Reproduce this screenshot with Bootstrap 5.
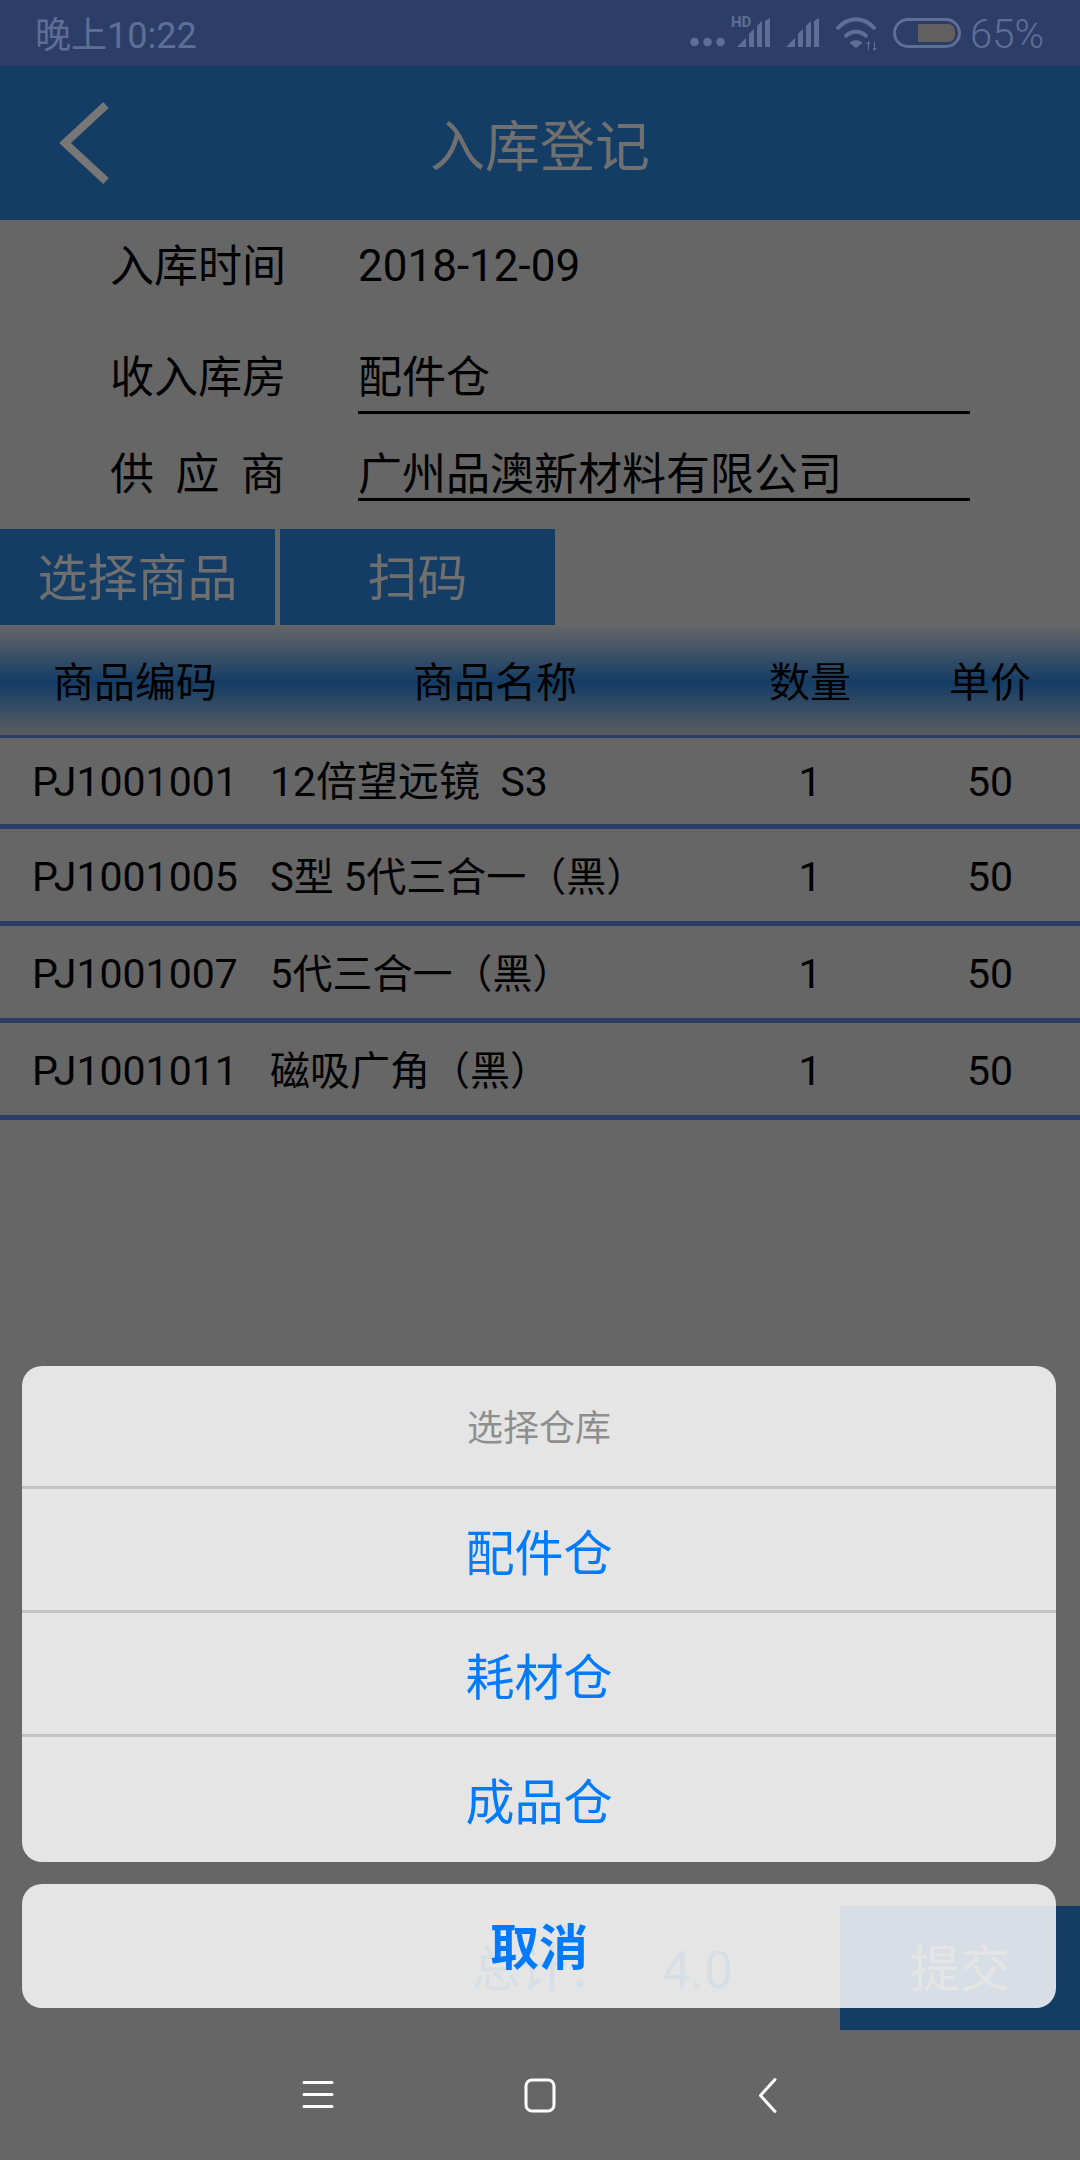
<!DOCTYPE html>
<html lang="zh-CN">
<head>
<meta charset="utf-8">
<title>入库登记</title>
<link rel="stylesheet" href="https://cdn.jsdelivr.net/npm/bootstrap@5.3.0/dist/css/bootstrap.min.css">
<script src="https://cdn.jsdelivr.net/npm/bootstrap@5.3.0/dist/js/bootstrap.bundle.min.js"></script>
<style>
html,body{margin:0;background:#fff}
body{font-family:Roboto,"Noto Sans CJK SC",sans-serif;color:#000}
.screen{width:1080px;height:2160px;overflow:hidden;position:relative;background:#fff}
.status{height:66px;background:#2c3e68;color:#5e6f96;position:relative;z-index:3;padding-left:35px;padding-right:36px}
.status-time{font-size:36px;line-height:1;padding-top:5px}
.status-pct{font-size:40px;line-height:1;font-weight:300;padding-top:4px}
.appbar{height:154px;background:#3298ff;position:relative}
.appbar svg{position:absolute;left:56px;top:34px;z-index:3}
.appbar-title{font-size:55px;line-height:1;color:#707070;position:relative;z-index:3;margin-top:8px}
.frow{padding-left:110px;font-size:44px}
.frow-label{width:248px;flex:none;line-height:1}
.frow-val{width:612px;line-height:1}
.frow1{height:90px;padding-top:2px}
.frow1 .frow-label{padding-top:2px}
.frow2{height:104px}
.frow3{height:87px}
.frow2 .frow-val,.frow3 .frow-val{border-bottom:3px solid #000}
.frow2 .frow-val{padding-bottom:11px}
.frow3 .frow-val{padding-bottom:1px}
.frow2 .frow-label{padding-bottom:14px}
.frow3 .frow-label{padding-bottom:4px;width:175px;margin-right:73px}
.tabs{margin-top:28px;height:96px;gap:5px}
.tab-btn{background:#3298ff;color:#6f6f6f;font-size:50px;height:96px;line-height:1;padding-top:4px}
.tab-btn span{position:relative;z-index:3}
.tab-a{width:275px}
.tab-b{width:275px}
.thead-band{background:linear-gradient(to bottom,#fff 0,#3298ff 52%,#e4e8ec 100%);font-size:41px;padding-top:6px}
.trow{font-size:40px;border-bottom:5px solid #6e9bff;padding-top:5px}
.thead-band,.trow{line-height:1}
.thead-band{border-bottom:3px solid #6e9bff;height:113px}
.trow{height:97px}
.trow.first{height:91px;padding-top:3px}
.c-code{width:270px;flex:none;padding-left:32px}
.trow .c-code{font-size:41px}
.c-name{width:450px;flex:none}
.c-name.wider{font-size:41px}
.c-qty{width:180px;flex:none;text-align:center}
.c-price{width:180px;flex:none;text-align:center}
.trow .c-qty,.trow .c-price{font-size:41px}
.h-code{text-align:center;padding-left:0}
.h-name{text-align:center}
.foot{height:124px;background:#fff;margin-top:auto;color:#3298ff;font-size:48px;line-height:1}
.foot-total{padding-left:472px;width:840px;padding-top:4px}
.foot-total b{font-weight:400;font-size:51px;margin-left:46px}
.foot-submit{width:240px;background:#3298ff;color:#fff;font-size:50px;padding-top:4px}
.softkeys{height:130px;background:#666;position:relative;z-index:3}
.dim{position:absolute;inset:0;background:rgba(0,0,0,.6);z-index:2;padding:0 24px 152px 22px}
.sheet{background:rgba(255,255,255,.83);border-radius:20px;overflow:hidden}
.sheet-title{height:120px;color:#8f8f8f;font-size:36px;line-height:1;padding-top:6px}
.sheet-opt{height:124px;border-top:3px solid #c4c4c8;color:#007aff;font-size:49px;line-height:1;padding-top:10px}
.sheet-opt.last{height:128px;padding-top:7px}
.sheet-cancel{height:124px;margin-top:22px;color:#007aff;font-size:49px;font-weight:700;line-height:1;padding-top:4px}
</style>
</head>
<body>
<div class="screen d-flex flex-column">
  <div class="status d-flex align-items-center justify-content-between">
    <span class="status-time">晚上10:22</span>
    <div class="d-flex align-items-center">
      <svg width="290" height="66" viewBox="0 0 290 66" fill="#5e6f96">
        <circle cx="14.5" cy="42" r="4.3"/><circle cx="27.5" cy="42" r="4.3"/><circle cx="40.5" cy="42" r="4.3"/>
        <text x="51" y="27" font-family="Roboto,sans-serif" font-size="15" font-weight="700">HD</text>
        <path d="M57 47 66 47 66 38Z"/><path d="M69 47V33.500L74 29V47Z"/><path d="M77 47V26L82 21V47Z"/><path d="M85 47V21L90 18V47Z"/>
        <path d="M106 47 115 47 115 38Z"/><path d="M118 47V33.500L123 29V47Z"/><path d="M126 47V26L131 21V47Z"/><path d="M134 47V21L139 18V47Z"/>
        <path d="M157 29C168 16 184 16 195 29" fill="none" stroke="#5e6f96" stroke-width="4"/>
        <path d="M165 37C171 30 181 30 187 37" fill="none" stroke="#5e6f96" stroke-width="4"/>
        <path d="M176 48 169.500 43C173 39 179 39 182.500 43Z"/>
        <path d="M188 50V44H186L189 41 190 44H189V50Z"/><path d="M195 42V48H197L194 51 193 48H194V42Z"/>
        <rect x="214.500" y="19.500" width="65" height="27" rx="13.500" fill="none" stroke="#5e6f96" stroke-width="3"/>
        <path d="M239 24H268A7 7 0 0 1 275 31V35A7 7 0 0 1 268 42H239A1 1 0 0 1 238 41V25A1 1 0 0 1 239 24Z" fill="#625f60"/>
      </svg>
      <span class="status-pct">65%</span>
    </div>
  </div>

  <div class="appbar d-flex align-items-center justify-content-center">
    <svg width="60" height="92" viewBox="0 0 60 92" fill="none"><path d="M50 5 9 43 50 81" stroke="#777" stroke-width="8"/></svg>
    <div class="appbar-title">入库登记</div>
  </div>

  <div class="frow frow1 d-flex align-items-center"><div class="frow-label">入库时间</div><div class="frow-val">2018-12-09</div></div>
  <div class="frow frow2 d-flex align-items-end"><div class="frow-label">收入库房</div><div class="frow-val">配件仓</div></div>
  <div class="frow frow3 d-flex align-items-end"><div class="frow-label d-flex justify-content-between"><span>供</span><span>应</span><span>商</span></div><div class="frow-val">广州品澳新材料有限公司</div></div>

  <div class="tabs d-flex">
    <div class="tab-btn tab-a d-flex align-items-center justify-content-center"><span>选择商品</span></div>
    <div class="tab-btn tab-b d-flex align-items-center justify-content-center"><span>扫码</span></div>
  </div>

  <div class="thead-band d-flex align-items-center">
    <div class="c-code h-code">商品编码</div><div class="c-name h-name">商品名称</div><div class="c-qty">数量</div><div class="c-price">单价</div>
  </div>
  <div class="trow first d-flex align-items-center"><div class="c-code">PJ1001001</div><div class="c-name wider">12倍望远镜&nbsp;&nbsp;S3</div><div class="c-qty">1</div><div class="c-price">50</div></div>
  <div class="trow d-flex align-items-center"><div class="c-code">PJ1001005</div><div class="c-name">S型 5代三合一（黑）</div><div class="c-qty">1</div><div class="c-price">50</div></div>
  <div class="trow d-flex align-items-center"><div class="c-code">PJ1001007</div><div class="c-name">5代三合一（黑）</div><div class="c-qty">1</div><div class="c-price">50</div></div>
  <div class="trow d-flex align-items-center"><div class="c-code">PJ1001011</div><div class="c-name">磁吸广角（黑）</div><div class="c-qty">1</div><div class="c-price">50</div></div>

  <div class="foot d-flex">
    <div class="foot-total d-flex align-items-center"><span>总计：</span><b>4.0</b></div>
    <div class="foot-submit d-flex align-items-center justify-content-center">提交</div>
  </div>

  <div class="softkeys d-flex align-items-center">
    <svg width="1080" height="130" viewBox="0 0 1080 130" fill="none" stroke="#fff" stroke-width="3" stroke-linecap="round" stroke-linejoin="round">
      <path d="M304 52.500H332M304 64.500H332M304 76.500H332"/>
      <rect x="526" y="50" width="28" height="31" rx="6"/>
      <path d="M775 49.500 760.500 65.500 775 81.500"/>
    </svg>
  </div>

  <div class="dim d-flex flex-column justify-content-end">
    <div class="sheet">
      <div class="sheet-title d-flex align-items-center justify-content-center">选择仓库</div>
      <div class="sheet-opt d-flex align-items-center justify-content-center">配件仓</div>
      <div class="sheet-opt d-flex align-items-center justify-content-center">耗材仓</div>
      <div class="sheet-opt last d-flex align-items-center justify-content-center">成品仓</div>
    </div>
    <div class="sheet sheet-cancel d-flex align-items-center justify-content-center">取消</div>
  </div>
</div>
</body>
</html>
